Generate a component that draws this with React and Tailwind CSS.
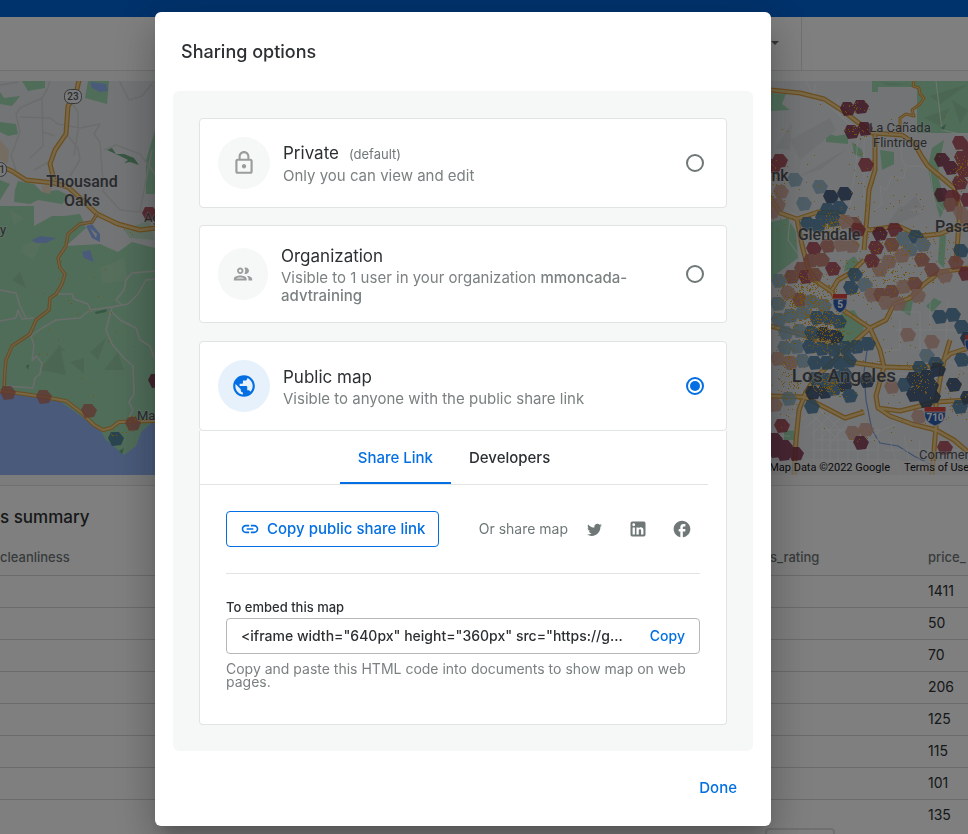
import { useState } from "react";
import { MdLink, MdLockOutline, MdOutlineGroup, MdPublic, MdFacebook } from "react-icons/md";
import clsx from "clsx";

const EMBED_CODE = '<iframe width="640px" height="360px" src="https://g...';
const PRICES = [1411, 50, 70, 206, 125, 115, 101, 135];

// hexbin fill scale, low to high
const FILL = {
  m: "#7d2b48",
  r: "#a63c4c",
  o: "#c07264",
  s: "#d6a496",
  l: "#8fb3c6",
  b: "#45799e",
  n: "#2b466c",
};

// [x, y, fill key]
const HEXES = [
  [848, 109, "m"], [861, 107, "m"], [852, 132, "m"], [865, 129, "m"], [780, 161, "r"], [774, 166, "r"], [866, 165, "r"],
  [820, 187, "l"], [804, 204, "l"], [795, 180, "l"], [831, 197, "n"], [845, 194, "n"], [828, 210, "b"], [840, 208, "b"], [834, 220, "b"], [823, 218, "b"],
  [808, 224, "b"], [818, 226, "b"], [854, 224, "o"], [846, 222, "s"], [858, 230, "r"], [772, 212, "s"], [778, 205, "s"], [781, 192, "s"],
  [880, 234, "m"], [895, 230, "r"], [892, 245, "o"], [814, 249, "r"], [828, 246, "o"], [841, 245, "s"], [852, 246, "s"], [876, 248, "r"],
  [904, 239, "l"], [916, 237, "b"], [923, 245, "l"], [910, 250, "l"], [922, 260, "o"], [902, 256, "s"],
  [960, 143, "r"], [970, 150, "r"], [962, 158, "r"], [942, 160, "m"], [951, 168, "m"], [964, 171, "r"], [960, 183, "r"], [942, 195, "m"], [953, 197, "r"],
  [951, 205, "o"], [961, 213, "s"], [968, 200, "r"], [961, 251, "b"], [968, 222, "s"], [956, 263, "o"], [966, 274, "r"],
  [833, 269, "r"], [811, 261, "o"], [802, 269, "o"], [792, 277, "o"], [806, 277, "r"], [815, 275, "o"], [800, 300, "o"], [822, 260, "o"],
  [880, 270, "s"], [872, 261, "r"], [889, 262, "s"], [932, 270, "o"], [945, 276, "s"], [855, 275, "b"], [865, 285, "l"], [851, 288, "b"],
  [872, 295, "s"], [881, 295, "o"], [892, 292, "o"], [904, 287, "s"], [915, 284, "o"], [886, 303, "s"], [918, 296, "s"], [899, 304, "s"],
  [779, 281, "l"], [788, 293, "s"], [778, 304, "l"], [812, 302, "l"], [824, 306, "l"], [779, 320, "l"], [791, 316, "l"], [803, 313, "l"],
  [817, 318, "b"], [829, 318, "b"], [839, 322, "b"], [786, 333, "l"], [800, 331, "l"], [812, 333, "b"], [824, 334, "n"], [836, 337, "n"],
  [785, 348, "l"], [797, 347, "l"], [810, 347, "b"], [822, 349, "b"], [834, 350, "b"], [846, 348, "b"], [857, 347, "b"], [868, 344, "b"],
  [791, 363, "s"], [803, 361, "l"], [815, 363, "b"], [827, 363, "b"], [839, 363, "b"], [849, 361, "b"], [778, 359, "s"], [845, 375, "b"],
  [789, 399, "l"], [812, 407, "b"], [813, 393, "n"], [825, 392, "n"], [834, 389, "b"], [845, 385, "n"], [850, 396, "b"], [838, 378, "b"],
  [867, 381, "n"], [826, 380, "b"], [816, 379, "b"], [775, 405, "s"], [892, 387, "s"],
  [940, 317, "b"], [953, 315, "b"], [962, 327, "b"], [968, 339, "n"], [927, 356, "l"], [936, 364, "b"], [920, 368, "b"], [905, 385, "b"],
  [914, 379, "n"], [927, 377, "n"], [920, 389, "n"], [931, 386, "n"], [914, 395, "n"], [926, 401, "n"], [938, 370, "n"], [954, 385, "n"],
  [962, 360, "b"], [960, 407, "b"], [968, 398, "n"], [933, 397, "n"], [932, 342, "s"], [908, 335, "s"],
  [919, 417, "s"], [945, 448, "r"], [853, 433, "s"], [866, 430, "s"], [861, 443, "m"], [782, 426, "r"], [775, 440, "m"], [785, 447, "m"],
  [776, 451, "m"], [796, 454, "m"], [784, 454, "m"],
  [8, 393, "o"], [44, 397, "o"], [89, 411, "o"], [116, 439, "b"], [133, 424, "o"], [156, 381, "m"], [150, 214, "r"],
];

// [x, y, spread x, spread y, count]
const LISTING_CLUSTERS = [
  [805, 300, 34, 34, 420], [825, 330, 26, 28, 260], [828, 385, 18, 12, 150], [830, 225, 14, 14, 90], [790, 375, 20, 50, 120],
  [890, 275, 60, 34, 200], [960, 170, 12, 22, 60], [922, 380, 18, 20, 60], [855, 108, 16, 8, 20], [856, 131, 16, 8, 22],
  [870, 200, 98, 100, 110], [870, 360, 98, 90, 100], [775, 190, 14, 36, 40], [955, 400, 20, 30, 30], [860, 436, 14, 8, 12],
  [905, 245, 60, 18, 90], [80, 330, 74, 85, 22], [118, 432, 16, 8, 12], [120, 232, 30, 8, 5], [133, 418, 8, 6, 8],
];

const random = (seed) => () => {
  seed = (seed * 1664525 + 1013904223) % 4294967296;
  return seed / 4294967296;
};

const rand = random(23);
const LISTINGS = LISTING_CLUSTERS.flatMap(([x, y, sx, sy, count]) =>
  Array.from({ length: count }, () => [
    Math.round(x + (rand() + rand() - 1) * sx),
    Math.round(y + (rand() + rand() - 1) * sy),
  ]),
).filter(([x, y]) => x < 155 || x > 770 || y > 475);

const HIGHWAYS = [
  // left
  "M79 80 L76 94 L68 106 L66 134 L55 150 L50 164 L54 180 M0 166 L12 171 L26 180 L54 183 L68 187 L80 198 L97 214 L118 224 L140 230 L156 228",
  // right, north
  "M771 90 L800 93 L824 99 L846 113 L860 124 L872 133 L902 135 L914 143 L922 157 L928 166 L954 188 L960 210 L956 262",
  "M875 135 L875 170 L869 190 L867 216 L864 250 M760 182 L772 200 L780 213 L797 219 L818 212 L838 213 L855 226 L870 230 L898 226 L920 236 L940 234 L968 222",
  "M797 219 L802 245 L808 268 L816 281 L832 292 L840 308 L870 328 L880 350 L884 367 L876 396 L878 408 L900 411 L936 402 L968 400",
  "M832 290 L838 280 L852 272 L864 260 M870 328 L850 346 L815 378 L806 392 L799 410 L796 440 L794 475 M771 396 L804 397 L826 408 L845 418 L864 412",
  "M870 328 L886 320 L894 304 L910 298 L924 284 L940 272 L968 268 M884 367 L920 368 L940 364 L950 354 L968 348 M950 340 L944 360 L940 380 L936 404 L936 426 L932 475",
  "M878 408 L890 416 L912 424 L936 430 L954 440 L968 452 M771 326 L800 334 L832 344 L850 362 L884 367",
];

const ROADS = [
  "M0 85 L18 82 M50 80 L48 88 L42 98 L20 108 L16 114 L20 132 L11 156 L16 170 M42 98 L43 146 L30 158 M20 117 L50 118 L58 124 L80 128 L100 124 L94 134 L100 142 L102 170 L104 190",
  "M66 134 L78 148 L80 160 L70 176 M43 132 L55 136 M119 80 L129 100 L142 96 L152 84 M104 150 L116 145 L140 154 L152 170 L156 176",
  "M34 170 L52 160 M102 190 L120 210 L140 212 L146 180 L152 150 M70 100 L78 112 L78 130 L74 156",
  "M0 321 L16 318 L18 310 L22 319 L34 318 M0 290 L16 293 L20 306 L26 318 M31 336 L34 345 L32 361 L36 356 L42 363 L40 374 L35 378 L33 388 L6 386",
  "M31 336 L42 328 L56 320 L80 318 L90 310 L112 307 L122 305 L116 300 L124 290 L126 280 L132 273 L156 271 M58 294 L72 294 L74 299 L88 304 L91 312",
  "M112 307 L109 318 L106 330 L112 344 L124 358 L133 366 L134 394 L129 402 L133 410 L128 420 M112 312 L120 320 L136 328 L140 340 L150 346 L154 358 M156 279 L146 280 L138 294 L128 304 L112 307",
];

const STREETS = [
  "M806 81 L812 92 L870 140 M838 98 L838 114 L866 140 M816 84 L814 92 M900 135 L902 160 L906 166 L904 178 L892 176 L886 190 L880 186 L882 204 L874 210",
  "M906 166 L920 166 L930 170 L934 200 L944 212 M936 81 L942 130 L960 134 L968 134 M782 206 L820 234 M864 140 L864 200 M858 134 L856 164 L850 206",
  "M790 220 L788 240 L798 254 M880 240 L890 250 L900 270 L880 290 M884 312 L920 312 L920 350 M900 320 L900 350 L880 350 M896 330 L930 330",
  "M880 374 L930 374 L930 410 M890 384 L964 384 M896 424 L870 436 M820 430 L880 430 M816 440 L880 440 M810 450 L878 450 M804 460 L900 460",
  "M814 420 L814 475 M822 426 L822 475 M830 430 L830 475 M838 430 L838 475 M848 430 L848 475 M858 430 L858 475 M868 430 L868 475 M878 430 L878 475",
  "M802 420 L818 404 M806 428 L826 408 M812 434 L836 410 M820 440 L842 416 M828 446 L850 420 M808 410 L836 438 M816 406 L842 432 M780 416 L796 416 M772 430 L796 430 M772 436 L790 436",
  "M890 440 L900 475 M904 436 L912 475 M920 440 L918 475 M884 450 L968 450 M900 462 L968 462 M946 444 L950 475 M940 356 L968 372 M948 300 L946 340 M930 300 L930 330 L960 330",
];

const MOUNTAIN_ROAD =
  "M97 214 L92 222 L80 224 L68 234 L66 246 L58 258 L60 268 L65 274 L62 284 L56 294 L50 298 L49 310 L36 320 L30 334 L12 346 L6 360 L5 370 L4 390";
const COAST_ROAD = "M0 391 L24 394 L44 397 L66 401 L82 413 L94 425 L103 430 L111 428 L119 422 L155 421";
const CREST_ROAD =
  "M914 81 L913 86 L919 88 L920 94 L924 98 L920 104 L912 110 L914 116 L906 114 L900 118 L900 134";

function hexPoints(x, y) {
  return [
    [x - 8, y - 1], [x - 5, y - 7], [x + 3, y - 7], [x + 8, y - 1], [x + 5, y + 6], [x - 4, y + 7],
  ].join(" ");
}

function Shield({ x, y, width, label }) {
  const w = width / 2;
  return (
    <g>
      <path d={`M${x - w} ${y - 9} H${x + w} V${y - 4} H${x - w} Z`} fill="#dc4740" />
      <path
        d={`M${x - w} ${y - 4} H${x + w} Q${x + w + 1} ${y + 6} ${x} ${y + 10} Q${x - w - 1} ${y + 6} ${x - w} ${y - 4} Z`}
        fill="#2f61b4"
        stroke="#dce3f0"
        strokeWidth=".8"
      />
      <text x={x} y={y + 5} textAnchor="middle" fontSize="10" fontWeight="700" fill="#fff">
        {label}
      </text>
    </g>
  );
}

function MapView() {
  return (
    <svg
      viewBox="0 81 968 394"
      preserveAspectRatio="xMidYMid slice"
      className="block h-[394px] w-full font-[Roboto,sans-serif]"
      role="img"
      aria-label="Map of Los Angeles"
    >
      <rect y="81" width="968" height="394" fill="#e6e8ec" />

      {/* Parks and hills */}
      <g fill="#a0dab3">
        <path d="M0 240 L0 206 L34 206 L34 226 L52 216 L64 216 L80 214 L86 228 L66 246 L100 244 L118 252 L132 242 L155 248 L155 475 L0 475 Z" />
        <path d="M0 92 L4 98 L20 96 L12 106 L0 104 Z M22 81 H45 V88 L28 91 Z M88 81 H109 L107 104 L85 98 Z M0 122 L16 124 L18 134 L8 136 L0 132 Z" />
        <path d="M15 190 L18 181 L34 184 L42 192 L58 190 L70 196 L62 204 L38 200 L30 204 L14 202 Z M146 160 L155 130 V194 L146 194 Z M0 180 L10 184 L0 200 Z" />
        <path d="M872 81 H968 V133 L917 133 L917 87 L878 87 L878 92 L872 92 Z M771 93 L786 94 L782 104 L790 110 L771 111 Z M826 133 L836 136 L848 134 L848 144 L826 142 Z" />
        <path d="M771 222 L788 218 L796 232 L798 258 L771 278 Z M880 150 L894 152 L894 164 L882 170 Z M852 142 L862 150 L863 158 L854 154 Z M932 148 L944 140 L940 160 L938 176 L946 206 L940 218 L932 190 L928 166 Z" />
        <path d="M842 312 L854 310 L864 326 L862 338 L844 346 L838 334 Z M899 304 L914 296 L910 316 L900 310 Z M846 262 L854 256 L860 264 L844 272 Z M934 298 L942 302 L932 312 L926 306 Z M784 430 H794 V440 H784 Z M940 230 L946 236 L944 268 L938 262 Z" />
      </g>
      <g fill="#97cfa8">
        <path d="M60 350 L58 344 L66 352 Z M40 370 L60 345 L66 375 Z M90 352 L106 338 L98 360 Z M70 362 L84 358 L84 374 Z M12 280 L20 272 L26 288 Z M104 370 L118 352 L124 370 Z" />
        <path d="M880 82 L910 84 L890 86 Z M930 96 L968 84 L940 104 Z M924 118 L950 108 L940 126 Z M952 100 L968 110 L960 124 Z" />
      </g>
      <g fill="#b1dfbd" opacity=".7">
        <path d="M24 244 L42 240 L34 260 L20 252 Z M100 268 L124 258 L128 280 L102 284 Z M10 210 L24 218 L14 226 Z M124 230 L150 220 L154 240 L130 238 Z" />
      </g>
      <g fill="#dcdfe3">
        <path d="M790 140 L830 118 L836 130 L800 160 Z M800 176 L848 148 L820 170 Z M884 230 L900 206 L920 214 Z M776 148 L792 122 L790 150 Z M900 210 L916 196 L922 208 Z" />
      </g>
      <path d="M0 140 L9 150 L8 164 L0 160 Z M42 186 L52 184 L50 194 L42 192 Z" fill="#ead9c4" />

      {/* Water */}
      <g fill="#93b5f4">
        <path d="M0 392 L28 394 L58 400 L78 414 L100 430 L106 440 L124 455 L136 446 L141 432 L155 420 L155 475 L0 475 Z" />
        <path d="M90 82 L106 84 L108 91 L100 92 L92 88 Z M32 240 L40 236 L56 238 L46 243 L36 243 Z M82 252 L90 250 L94 262 L84 258 Z" />
        <path d="M86 226 L92 224 L100 234 L100 242 L92 238 Z" />
      </g>
      <path d="M136 446 L141 432 L148 424 L155 420 L155 412 L128 420 L104 432 L122 454 Z" fill="#a0dab3" />
      <path d="M90 228 L97 234 L96 238 Z" fill="#e8eaee" />
      <path
        d="M867 350 L864 372 L866 400 L872 430 L880 443 L898 446 L914 456 L934 466"
        fill="none"
        stroke="#7d9fe0"
        strokeWidth="1.2"
      />

      {/* Roads */}
      <g fill="none" stroke="#f8f9fa" strokeLinejoin="round">
        {STREETS.map((d) => (
          <path key={d} d={d} strokeWidth="1" opacity=".7" />
        ))}
      </g>
      <g fill="none" stroke="#d5dbd7" strokeLinejoin="round" strokeWidth="1.5">
        {ROADS.map((d) => (
          <path key={d} d={d} />
        ))}
      </g>
      <g fill="none" strokeLinejoin="round">
        {HIGHWAYS.map((d) => (
          <path key={d} d={d} stroke="#d79d3c" strokeWidth="5" />
        ))}
        {HIGHWAYS.map((d) => (
          <path key={d} d={d} stroke="#f0d090" strokeWidth="2.5" />
        ))}
        <path d={MOUNTAIN_ROAD} stroke="#cf9c48" strokeWidth="3.5" />
        <path d={MOUNTAIN_ROAD} stroke="#e3c48d" strokeWidth="1.5" />
        <path d={COAST_ROAD} stroke="#d79d3c" strokeWidth="4" />
        <path d={COAST_ROAD} stroke="#f0d090" strokeWidth="2" />
        <path d={CREST_ROAD} stroke="#d79d3c" strokeWidth="3" />
        <path d={CREST_ROAD} stroke="#f0d090" />
      </g>
      <path
        d="M107 150 L112 148 L116 154 L124 154 L134 158 L139 165 L130 162 L124 163 L128 160 L118 155 Z M95 312 L107 309 L106 312 L96 314 Z M26 366 L29 364 L28 370 Z M119 451 L124 448 L122 454 Z M940 128 L946 124 L944 130 Z"
        fill="#6fae84"
      />

      {/* Hexbins */}
      <g opacity=".82">
        {HEXES.map(([x, y, fill]) => (
          <polygon key={`${x}-${y}`} points={hexPoints(x, y)} fill={FILL[fill]} />
        ))}
      </g>

      {/* Listings */}
      <g fill="#e5a81c">
        {LISTINGS.map(([x, y], i) => (
          <rect key={i} x={x} y={y} width="1" height="1" />
        ))}
      </g>

      {/* Labels */}
      <g fill="#50545a" stroke="#f0f1f3" strokeWidth="2" strokeOpacity=".35" paintOrder="stroke" textAnchor="middle">
        <g fontSize="16" fontWeight="500">
          <text x="82" y="187">Thousand</text>
          <text x="82" y="206">Oaks</text>
          <text x="829" y="240">Glendale</text>
          <text x="780" y="181">nk</text>
          <text x="935" y="232" textAnchor="start">Pasadena</text>
        </g>
        <text x="844" y="382" fontSize="19" fontWeight="500">Los Angeles</text>
        <g fontSize="13">
          <text x="900" y="132">La Cañada</text>
          <text x="900" y="147">Flintridge</text>
          <text x="144" y="222" textAnchor="start">Agoura</text>
          <text x="137" y="420" textAnchor="start">Malibu</text>
          <text x="0" y="234" textAnchor="start">y</text>
          <text x="919" y="459" textAnchor="start">Commerce</text>
        </g>
      </g>

      {/* Route shields */}
      <g fill="#f1f2f4" stroke="#6a6e73">
        <rect x="64.5" y="89.5" width="17" height="14" rx="6" />
        <rect x="-9.5" y="162.5" width="16" height="14" rx="6" />
      </g>
      <g fontSize="10" fontWeight="500" fill="#55595e" textAnchor="middle">
        <text x="73" y="100">23</text>
        <text x="2" y="173">1</text>
      </g>
      <Shield x={840} y={303} width={14} label="5" />
      <Shield x={935} y={416} width={21} label="710" />
      <Shield x={972} y={344} width={14} label="" />

      <rect x="771" y="461" width="197" height="14" fill="#f3f4f5" opacity=".6" />
      <g fontSize="11" fill="#111">
        <text x="890" y="471" textAnchor="end">Map Data ©2022 Google</text>
        <text x="904" y="471">Terms of Use</text>
      </g>
    </svg>
  );
}

function Dashboard() {
  return (
    <div className="flex h-screen flex-col overflow-hidden bg-white">
      <div className="h-[17px] shrink-0 bg-[#0064d6]" />
      <div className="flex h-[54px] shrink-0 justify-end border-b border-[#dfe2e1]">
        <div className="flex w-10 items-center border-r border-[#dfe2e1] pl-2">
          <svg viewBox="0 0 10 5" className="h-[5px] w-[10px]" fill="#66696b">
            <path d="M1 0h8L5 4z" />
          </svg>
        </div>
        <div className="w-[166px]" />
      </div>
      <div className="shrink-0 border-b border-[#dfe2e1] bg-[#f6f8f7] pt-[10px] pb-[10px]">
        <MapView />
      </div>
      <h2 className="mt-[19px] shrink-0 text-[17px] leading-6 font-medium text-[#2c3032]">s summary</h2>
      <div className="mt-3 h-[279px] shrink-0 overflow-hidden">
        <table className="w-full table-fixed border-collapse text-left">
          <thead>
            <tr className="h-[34px] border-b border-[#d5d8d8] text-[13px] text-[#6f7777]">
              <th className="font-medium">cleanliness</th>
              <th className="w-[158px] font-medium">s_rating</th>
              <th className="w-10 font-medium">price_</th>
            </tr>
          </thead>
          <tbody>
            {PRICES.map((price) => (
              <tr key={price} className="h-8 border-b border-[#d5d8d8] text-sm text-[#2c3032]">
                <td />
                <td />
                <td>{price}</td>
              </tr>
            ))}
          </tbody>
        </table>
      </div>
      <div className="mt-2 mr-[133px] h-8 w-[70px] shrink-0 self-end rounded border-2 border-[#dfe2e1]" />
    </div>
  );
}

function ShareOption({ value, selected, onSelect, icon, iconWidth = "w-[52px]", title, note, children, className }) {
  const active = selected === value;

  return (
    <label
      className={clsx(
        "flex cursor-pointer items-center rounded border border-[#e1e4e4] bg-white pr-[22px] pl-[18px]",
        className,
      )}
    >
      <span
        className={clsx(
          "flex h-[52px] shrink-0 items-center justify-center rounded-full",
          iconWidth,
          active ? "bg-[#e6f1fc] text-[#036fe2]" : "bg-[#f6f8f7] text-[#9a9d9d]",
        )}
      >
        {icon}
      </span>
      <span className="ml-[13px] min-w-0 flex-1">
        <span className="block text-[17px] leading-6 text-[#2c3032]">
          {title}
          {note && <span className="ml-[10px] text-[13px] text-[#6f7777]">{note}</span>}
        </span>
        <span className="mt-px block text-[15px] leading-[18px] text-[#7b8080]">{children}</span>
      </span>
      <input
        type="radio"
        name="privacy"
        value={value}
        checked={active}
        onChange={() => onSelect(value)}
        className="ml-8 flex size-[18px] shrink-0 appearance-none items-center justify-center rounded-full border-2 border-[#6f7777] before:size-[10px] before:rounded-full checked:border-[#036fe2] checked:before:bg-[#036fe2]"
      />
    </label>
  );
}

function SocialLinks() {
  return (
    <div className="flex items-center gap-6 text-[#6f7777]">
      <a href="#twitter" aria-label="Twitter" className="flex size-5 items-center justify-center">
        <svg viewBox="0 0 24 24" className="size-[17px]" fill="currentColor">
          <path d="M22.46 6c-.77.35-1.6.58-2.46.69.88-.53 1.56-1.37 1.88-2.38-.83.5-1.75.85-2.72 1.05C18.37 4.5 17.26 4 16 4c-2.35 0-4.27 1.92-4.27 4.29 0 .34.04.67.11.98C8.28 9.09 5.11 7.38 3 4.79c-.37.63-.58 1.37-.58 2.15 0 1.49.75 2.81 1.91 3.56-.71 0-1.37-.2-1.95-.5v.03c0 2.08 1.48 3.82 3.44 4.21a4.22 4.22 0 0 1-1.93.07 4.28 4.28 0 0 0 4 2.98 8.521 8.521 0 0 1-5.33 1.84c-.34 0-.68-.02-1.02-.06C3.44 20.29 5.7 21 8.12 21 16 21 20.33 14.46 20.33 8.79c0-.19 0-.37-.01-.56.84-.6 1.56-1.36 2.14-2.23z" />
        </svg>
      </a>
      <a href="#linkedin" aria-label="LinkedIn">
        <svg viewBox="0 0 24 24" className="size-5" fill="currentColor">
          <path d="M19 3a2 2 0 0 1 2 2v14a2 2 0 0 1-2 2H5a2 2 0 0 1-2-2V5a2 2 0 0 1 2-2h14m-.5 15.5v-5.3a3.26 3.26 0 0 0-3.26-3.26c-.85 0-1.84.52-2.32 1.3v-1.11h-2.79v8.37h2.79v-4.93c0-.77.62-1.4 1.39-1.4a1.4 1.4 0 0 1 1.4 1.4v4.93h2.79M6.88 8.56a1.68 1.68 0 0 0 1.68-1.68c0-.93-.75-1.69-1.68-1.69a1.69 1.69 0 0 0-1.69 1.69c0 .93.76 1.68 1.69 1.68m1.39 9.94v-8.37H5.5v8.37h2.77z" />
        </svg>
      </a>
      <a href="#facebook" aria-label="Facebook">
        <MdFacebook className="size-5" />
      </a>
    </div>
  );
}

function SharePanel() {
  const [tab, setTab] = useState("link");

  const copy = (text) => navigator.clipboard?.writeText(text);

  const tabClass = (name) =>
    clsx(
      "cursor-pointer border-b-2 px-[18px] pt-1 text-[15px] font-medium",
      tab === name ? "border-[#036fe2] text-[#036fe2]" : "border-transparent text-[#2c3032]",
    );

  return (
    <div className="rounded-b border border-t-0 border-[#e1e4e4] bg-white pb-9">
      <div role="tablist" className="mr-[18px] flex h-[54px] justify-center border-b border-[#e1e4e4]">
        <button role="tab" aria-selected={tab === "link"} className={tabClass("link")} onClick={() => setTab("link")}>
          Share Link
        </button>
        <button role="tab" aria-selected={tab === "dev"} className={tabClass("dev")} onClick={() => setTab("dev")}>
          Developers
        </button>
      </div>

      <div className="px-[26px] pt-[26px]">
        <div className="flex items-center justify-between border-b border-[#e1e4e4] pb-[26px]">
          <button
            onClick={() => copy(window.location.href)}
            className="flex h-9 cursor-pointer items-center gap-[7px] rounded border border-[#036fe2] px-[13px] text-[15px] font-medium text-[#036fe2]"
          >
            <MdLink className="size-5" />
            Copy public share link
          </button>
          <div className="flex items-center gap-4 pr-2">
            <span className="text-sm text-[#6f7777]">Or share map</span>
            <SocialLinks />
          </div>
        </div>

        <label htmlFor="embed" className="mt-6 block text-[13px] leading-[18px] font-medium text-[#2c3032]">
          To embed this map
        </label>
        <div className="mt-[2px] flex h-9 items-center gap-4 rounded border border-[#b5b8b8] px-[14px]">
          <input
            id="embed"
            readOnly
            value={EMBED_CODE}
            className="min-w-0 flex-1 text-sm font-medium text-[#2c3032] outline-none"
          />
          <button onClick={() => copy(EMBED_CODE)} className="cursor-pointer text-sm font-medium text-[#036fe2]">
            Copy
          </button>
        </div>
        <p className="mt-2 text-sm leading-[13px] text-[#7b8080]">
          Copy and paste this HTML code into documents to show map on web pages.
        </p>
      </div>
    </div>
  );
}

export default function App() {
  const [privacy, setPrivacy] = useState("public");

  return (
    <div className="font-[Inter,sans-serif]">
      <Dashboard />

      <div className="fixed inset-0 flex justify-center overflow-hidden bg-black/50 pt-3 pr-[42px] pb-2">
        <div
          role="dialog"
          aria-labelledby="sharing-title"
          className="flex w-full max-w-[616px] flex-col self-start rounded-md bg-white shadow-[0_11px_15px_-7px_rgba(0,0,0,0.2),0_24px_38px_3px_rgba(0,0,0,0.14),0_9px_46px_8px_rgba(0,0,0,0.12)]"
        >
          <h1 id="sharing-title" className="px-[26px] pt-7 pb-[27px] text-lg leading-6 font-medium text-[#2c3032]">
            Sharing options
          </h1>

          <div className="mx-[18px] rounded-md bg-[#f6f8f7] px-[26px] pt-[27px] pb-[26px]">
            <ShareOption
              value="private"
              selected={privacy}
              onSelect={setPrivacy}
              icon={<MdLockOutline className="size-[26px]" />}
              title="Private"
              note="(default)"
              className="h-[90px]"
            >
              Only you can view and edit
            </ShareOption>

            <ShareOption
              value="organization"
              selected={privacy}
              onSelect={setPrivacy}
              icon={<MdOutlineGroup className="size-[22px]" />}
              iconWidth="w-[50px]"
              title="Organization"
              className="mt-[17px] mb-[18px] h-[98px]"
            >
              Visible to 1 user in your organization <span className="font-medium">mmoncada-advtraining</span>
            </ShareOption>

            <ShareOption
              value="public"
              selected={privacy}
              onSelect={setPrivacy}
              icon={<MdPublic className="size-[26px]" />}
              title="Public map"
              className="h-[90px]"
            >
              Visible to anyone with the public share link
            </ShareOption>

            {privacy === "public" && <SharePanel />}
          </div>

          <div className="flex justify-end px-[34px] pt-[25px] pb-[26px]">
            <button className="cursor-pointer text-[15px] leading-6 font-medium text-[#036fe2]">Done</button>
          </div>
        </div>
      </div>
    </div>
  );
}
